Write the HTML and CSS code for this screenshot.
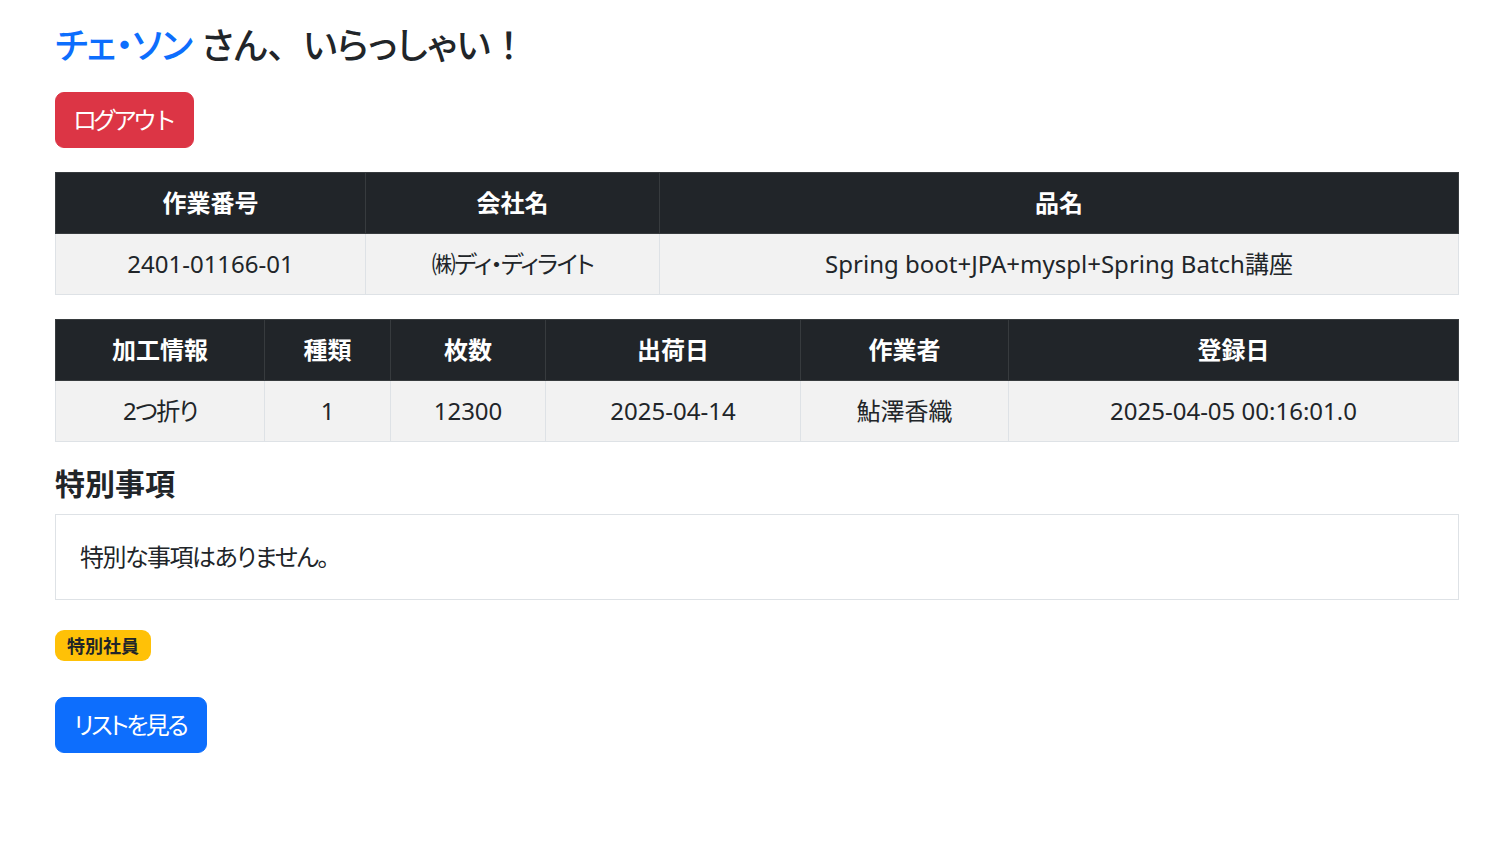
FILE: index.html
```html
<!DOCTYPE html>
<html lang="ja">
<head>
<meta charset="utf-8">
<title>作業詳細</title>
<link rel="stylesheet" href="styles.css">
</head>
<body>
<div class="container">
  <h3 class="welcome"><span class="name">チェ・ソン</span> さん<span class="fw">、</span>いらっしゃい<span class="fw">！</span></h3>
  <button class="btn btn-danger">ログアウト</button>

  <table class="tbl tbl-a">
    <colgroup><col class="c-a1"><col class="c-a2"><col></colgroup>
    <thead><tr><th>作業番号</th><th>会社名</th><th>品名</th></tr></thead>
    <tbody><tr><td>2401-01166-01</td><td class="jp-tight">㈱ディ・ディライト</td><td>Spring boot+JPA+myspl+Spring Batch講座</td></tr></tbody>
  </table>

  <table class="tbl tbl-b">
    <colgroup><col class="c-b1"><col class="c-b2"><col class="c-b3"><col class="c-b4"><col class="c-b5"><col></colgroup>
    <thead><tr><th>加工情報</th><th>種類</th><th>枚数</th><th>出荷日</th><th>作業者</th><th>登録日</th></tr></thead>
    <tbody><tr><td class="jp-tight">2つ折り</td><td>1</td><td>12300</td><td>2025-04-14</td><td>鮎澤香織</td><td>2025-04-05 00:16:01.0</td></tr></tbody>
  </table>

  <h5 class="section-title">特別事項</h5>
  <div class="card"><p class="card-text">特別な事項はありません。</p></div>

  <div class="badge-row"><span class="badge">特別社員</span></div>

  <a class="btn btn-primary">リストを見る</a>
</div>
</body>
</html>
```
FILE: styles.css
```css
* { box-sizing: border-box; }
html, body { margin: 0; padding: 0; background: #fff; }
body {
  font-family: "Noto Sans", "Noto Sans CJK JP", sans-serif;
  font-feature-settings: "palt";
  font-size: 24px;
  line-height: 1.5;
  color: #212529;
}
.container {
  width: 1404px;
  margin-left: 55px;
  padding-top: 21px;
  display: flex;
  flex-direction: column;
  align-items: flex-start;
}
.welcome {
  margin: 0 0 21px;
  font-size: 36px;
  line-height: 50px;
  font-weight: 500;
}
.name { color: #0d6efd; letter-spacing: -1px; }
.fw { font-feature-settings: normal; }
.btn {
  display: inline-block;
  font-family: inherit;
  font-size: 24px;
  line-height: 36px;
  padding: 9px 18px;
  border: 1px solid transparent;
  border-radius: 9px;
  color: #fff;
  cursor: pointer;
  text-decoration: none;
}
.btn-danger {
  background: #dc3545;
  border-color: #dc3545;
  margin-bottom: 24px;
  letter-spacing: -4px;
  padding-left: 17px;
  padding-right: 20px;
}
.btn-primary {
  background: #0d6efd;
  border-color: #0d6efd;
  letter-spacing: -2.5px;
  padding-right: 20px;
}
.tbl {
  width: 100%;
  border-collapse: collapse;
  table-layout: fixed;
  margin-bottom: 24px;
  text-align: center;
}
.tbl th, .tbl td {
  padding: 12px;
  line-height: 36px;
  font-weight: 400;
}
.tbl th {
  background: #212529;
  color: #fff;
  font-weight: 700;
  border: 1px solid #373b3e;
}
.tbl td {
  background: #f2f2f2;
  border: 1px solid #dee2e6;
}
.tbl td.jp-tight { letter-spacing: -1.5px; }
.c-a1 { width: 310px; }
.c-a2 { width: 294px; }
.c-b1 { width: 209px; }
.c-b2 { width: 126px; }
.c-b3 { width: 155px; }
.c-b4 { width: 255px; }
.c-b5 { width: 208px; }
.section-title {
  margin: 0 0 12px;
  font-size: 30px;
  line-height: 36px;
  font-weight: 700;
}
.card {
  width: 100%;
  border: 1px solid #dee2e6;
  padding: 24px;
  margin-bottom: 30px;
}
.card-text { margin: 0; letter-spacing: -1.5px; }
.badge-row { margin-bottom: 36px; line-height: 0; }
.badge {
  display: inline-block;
  background: #ffc107;
  color: #212529;
  font-size: 18px;
  line-height: 18px;
  font-weight: 700;
  padding: 6.5px 12px;
  border-radius: 9px;
}
```
